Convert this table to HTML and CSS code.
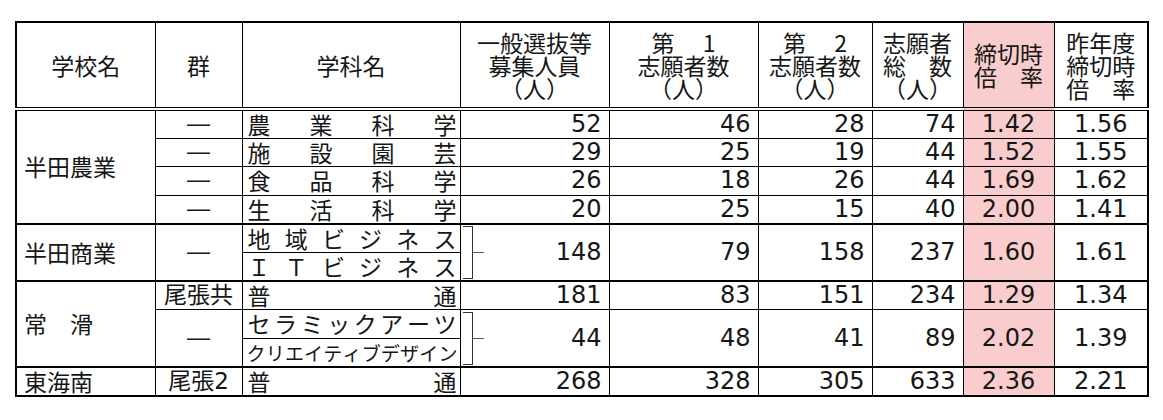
FILE: index.html
```html
<!DOCTYPE html>
<html lang="ja">
<head>
<meta charset="utf-8">
<title>志願者数</title>
<link rel="stylesheet" href="styles.css">
</head>
<body>
<div class="sheet">
<table class="tbl">
<colgroup>
<col class="c-school"><col class="c-gun"><col class="c-dept"><col class="c-bosyu"><col class="c-d1"><col class="c-d2"><col class="c-total"><col class="c-rate"><col class="c-prev">
</colgroup>
<thead>
<tr>
<th>学校名</th>
<th>群</th>
<th>学科名</th>
<th>一般選抜等<br>募集人員<br>（人）</th>
<th>第　 1<br>志願者数<br>（人）</th>
<th>第　 2<br>志願者数<br>（人）</th>
<th>志願者<br>総　数<br>（人）</th>
<th class="pink">締切時<br>倍　率</th>
<th>昨年度<br>締切時<br>倍　率</th>
</tr>
</thead>
<tbody>
<tr class="first">
<td class="school" rowspan="4">半田農業</td>
<td class="gun">―</td>
<td class="dept"><div class="sp"><span>農</span><span>業</span><span>科</span><span>学</span></div></td>
<td class="num">52</td><td class="num">46</td><td class="num">28</td><td class="num">74</td>
<td class="rate pink">1.42</td><td class="rate">1.56</td>
</tr>
<tr>
<td class="gun">―</td>
<td class="dept"><div class="sp"><span>施</span><span>設</span><span>園</span><span>芸</span></div></td>
<td class="num">29</td><td class="num">25</td><td class="num">19</td><td class="num">44</td>
<td class="rate pink">1.52</td><td class="rate">1.55</td>
</tr>
<tr>
<td class="gun">―</td>
<td class="dept"><div class="sp"><span>食</span><span>品</span><span>科</span><span>学</span></div></td>
<td class="num">26</td><td class="num">18</td><td class="num">26</td><td class="num">44</td>
<td class="rate pink">1.69</td><td class="rate">1.62</td>
</tr>
<tr>
<td class="gun">―</td>
<td class="dept"><div class="sp"><span>生</span><span>活</span><span>科</span><span>学</span></div></td>
<td class="num">20</td><td class="num">25</td><td class="num">15</td><td class="num">40</td>
<td class="rate pink">2.00</td><td class="rate">1.41</td>
</tr>
<tr class="grp">
<td class="school" rowspan="2">半田商業</td>
<td class="gun" rowspan="2">―</td>
<td class="dept"><div class="sp"><span>地</span><span>域</span><span>ビ</span><span>ジ</span><span>ネ</span><span>ス</span></div></td>
<td class="num bk" rowspan="2"><div class="bkrow"><span class="bracket"><span class="bbox"></span><span class="btick"></span></span><span>148</span></div></td>
<td class="num" rowspan="2">79</td><td class="num" rowspan="2">158</td><td class="num" rowspan="2">237</td>
<td class="rate pink" rowspan="2">1.60</td><td class="rate" rowspan="2">1.61</td>
</tr>
<tr>
<td class="dept"><div class="sp"><span>Ｉ</span><span>Ｔ</span><span>ビ</span><span>ジ</span><span>ネ</span><span>ス</span></div></td>
</tr>
<tr class="grp">
<td class="school" rowspan="3">常　滑</td>
<td class="gun">尾張共</td>
<td class="dept"><div class="sp"><span>普</span><span>通</span></div></td>
<td class="num">181</td><td class="num">83</td><td class="num">151</td><td class="num">234</td>
<td class="rate pink">1.29</td><td class="rate">1.34</td>
</tr>
<tr>
<td class="gun" rowspan="2">―</td>
<td class="dept"><div class="sp"><span>セ</span><span>ラ</span><span>ミ</span><span>ッ</span><span>ク</span><span>ア</span><span>ー</span><span>ツ</span></div></td>
<td class="num bk" rowspan="2"><div class="bkrow"><span class="bracket"><span class="bbox"></span><span class="btick"></span></span><span>44</span></div></td>
<td class="num" rowspan="2">48</td><td class="num" rowspan="2">41</td><td class="num" rowspan="2">89</td>
<td class="rate pink" rowspan="2">2.02</td><td class="rate" rowspan="2">1.39</td>
</tr>
<tr>
<td class="dept small"><div class="sp"><span>ク</span><span>リ</span><span>エ</span><span>イ</span><span>テ</span><span>ィ</span><span>ブ</span><span>デ</span><span>ザ</span><span>イ</span><span>ン</span></div></td>
</tr>
<tr class="grp">
<td class="school">東海南</td>
<td class="gun">尾張2</td>
<td class="dept"><div class="sp"><span>普</span><span>通</span></div></td>
<td class="num">268</td><td class="num">328</td><td class="num">305</td><td class="num">633</td>
<td class="rate pink">2.36</td><td class="rate">2.21</td>
</tr>
</tbody>
</table>
</div>
</body>
</html>
```

FILE: styles.css
```css
html, body {
  margin: 0;
  background: #ffffff;
}
body {
  font-family: "DejaVu Sans", "Noto Sans CJK JP", sans-serif;
  color: #161616;
}
.sheet {
  padding: 21px 0 0 15px;
}
.tbl {
  border-collapse: collapse;
  table-layout: fixed;
  width: 1132px;
  border: 2px solid #000;
}
.c-school { width: 139px; }
.c-gun { width: 87px; }
.c-dept { width: 218px; }
.c-bosyu { width: 149px; }
.c-d1 { width: 149px; }
.c-d2 { width: 114px; }
.c-total { width: 91px; }
.c-rate { width: 91px; }
.c-prev { width: 94px; }

.tbl th, .tbl td {
  border: 1px solid #000;
  padding: 0;
  font-weight: normal;
  font-size: 24px;
}
.tbl th {
  height: 84px;
  line-height: 23px;
  text-align: center;
  vertical-align: middle;
  font-family: "Noto Sans CJK JP", sans-serif;
  font-size: 23px;
}
.tbl td {
  height: 27.2px;
  line-height: 25px;
  vertical-align: middle;
}
.tbl tr.first td {
  border-top: 4px double #000;
}
.tbl tr.grp td {
  border-top: 2px solid #000;
}
.pink {
  background: #f9cdcd;
}
.school {
  text-align: left;
  padding-left: 7px !important;
  font-family: "Noto Sans CJK JP", sans-serif;
  font-size: 23px !important;
}
.gun {
  text-align: center;
  font-family: "DejaVu Sans", "Noto Sans CJK JP", sans-serif;
  font-size: 23px !important;
}
.dept {
  padding: 0 3px 0 5px !important;
  font-family: "Noto Sans CJK JP", sans-serif;
  font-size: 23px !important;
}
.dept.small {
  font-size: 19px !important;
  padding: 0 2px 0 4px !important;
}
.sp {
  display: flex;
  justify-content: space-between;
}
.num {
  text-align: right;
  padding-right: 7px !important;
}
.rate {
  text-align: center;
}
.bkrow {
  display: flex;
  justify-content: space-between;
  align-items: center;
}
.bracket {
  display: flex;
  align-items: center;
  margin-left: 2px;
}
.bbox {
  width: 9px;
  height: 51px;
  border: 1.5px solid #333;
  border-left: 0;
}
.btick {
  width: 11px;
  border-top: 1px solid #555;
}
```
